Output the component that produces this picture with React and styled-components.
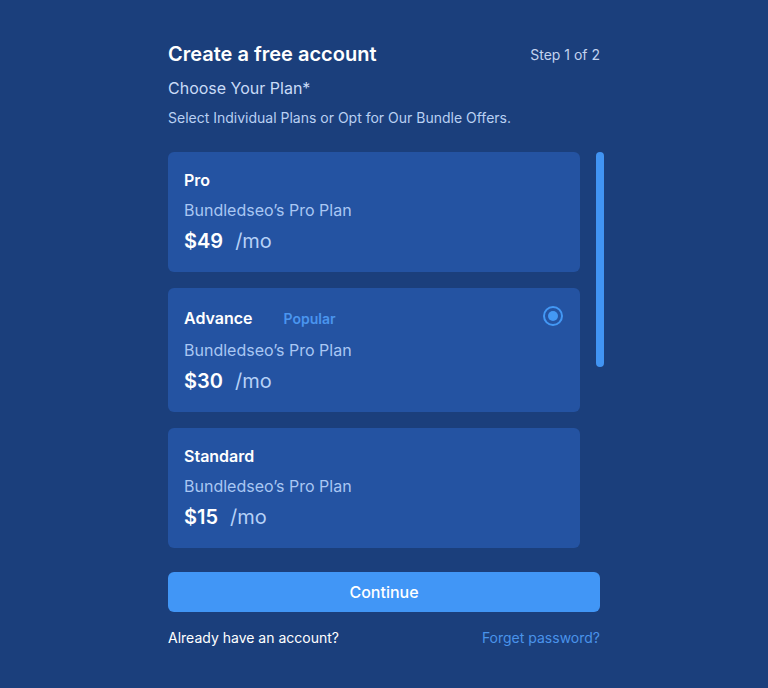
import React from "react";
import styled, { createGlobalStyle } from "styled-components";

const plans = [
	{ name: "Pro", desc: "Bundledseo’s Pro Plan", price: "$49" },
	{ name: "Advance", desc: "Bundledseo’s Pro Plan", price: "$30", popular: true, selected: true },
	{ name: "Standard", desc: "Bundledseo’s Pro Plan", price: "$15" },
];

export default function App() {
	return (
		<>
			<Global />
			<Page>
				<Form>
					<Header>
						<Title>Create a free account</Title>
						<Step>Step 1 of 2</Step>
					</Header>
					<Label>Choose Your Plan*</Label>
					<Hint>Select Individual Plans or Opt for Our Bundle Offers.</Hint>
					<ListRow>
						<List>
							{plans.map((p) => (
								<Card key={p.name}>
									<CardHead $tall={p.selected}>
										<Name>{p.name}</Name>
										{p.popular && <Badge>Popular</Badge>}
										{p.selected && <Radio />}
									</CardHead>
									<Desc>{p.desc}</Desc>
									<Price>
										{p.price}
										<Per>/mo</Per>
									</Price>
								</Card>
							))}
						</List>
						<Track>
							<Thumb />
						</Track>
					</ListRow>
					<Button>Continue</Button>
					<Footer>
						<span>Already have an account?</span>
						<LinkText href="#">Forget password?</LinkText>
					</Footer>
				</Form>
			</Page>
		</>
	);
}

const Global = createGlobalStyle`
	body {
		margin: 0;
		background: #1b3f7c;
		font-family: Inter, "Noto Sans", sans-serif;
	}
`;

const Page = styled.div`
	min-height: 688px;
	display: flex;
	justify-content: center;
	background: #1b3f7c;
`;

const Form = styled.div`
	width: 432px;
	padding-top: 40px;
	display: flex;
	flex-direction: column;
`;

const Header = styled.div`
	display: flex;
	justify-content: space-between;
	align-items: center;
	height: 28px;
`;

const Title = styled.h1`
	margin: 0;
	font-size: 20px;
	font-weight: 600;
	color: #ffffff;
`;

const Step = styled.span`
	font-size: 14px;
	color: #c3d3ef;
`;

const Label = styled.div`
	margin-top: 8px;
	font-size: 16px;
	line-height: 24px;
	color: #c9dbf7;
`;

const Hint = styled.div`
	margin-top: 8px;
	font-size: 14px;
	line-height: 20px;
	color: #b9d0f3;
`;

const ListRow = styled.div`
	margin-top: 24px;
	display: flex;
	gap: 16px;
	width: 436px;
	height: 396px;
`;

const List = styled.div`
	width: 412px;
	display: flex;
	flex-direction: column;
	gap: 16px;
	overflow: hidden;
`;

const Card = styled.div`
	flex: none;
	background: #2453a2;
	border-radius: 6px;
	padding: 16px;
	display: flex;
	flex-direction: column;
`;

const CardHead = styled.div`
	display: flex;
	align-items: center;
	height: ${(p) => (p.$tall ? "28px" : "24px")};
`;

const Name = styled.span`
	font-size: 16px;
	font-weight: 600;
	color: #ffffff;
`;

const Badge = styled.span`
	margin-left: 31px;
	font-size: 14px;
	font-weight: 600;
	color: #4a95ef;
`;

const Radio = styled.span`
	align-self: flex-start;
	margin: 2px 1px 0 auto;
	width: 20px;
	height: 20px;
	box-sizing: border-box;
	border: 2px solid #4398f5;
	border-radius: 50%;
	display: flex;
	align-items: center;
	justify-content: center;
	&::after {
		content: "";
		width: 10px;
		height: 10px;
		border-radius: 50%;
		background: #4398f5;
	}
`;

const Desc = styled.div`
	margin-top: 6px;
	font-size: 16px;
	line-height: 24px;
	color: #a9c7f3;
`;

const Price = styled.div`
	margin-top: 5px;
	font-size: 20px;
	line-height: 29px;
	font-weight: 600;
	color: #ffffff;
`;

const Per = styled.span`
	margin-left: 12px;
	font-weight: 400;
	color: #b6d1f7;
`;

const Track = styled.div`
	width: 8px;
`;

const Thumb = styled.div`
	width: 8px;
	height: 215px;
	border-radius: 4px;
	background: #4194f3;
`;

const Button = styled.button`
	margin-top: 24px;
	height: 40px;
	border: none;
	border-radius: 6px;
	background: #4196f6;
	color: #ffffff;
	font-family: inherit;
	font-size: 16px;
	font-weight: 500;
	cursor: pointer;
`;

const Footer = styled.div`
	margin-top: 16px;
	display: flex;
	justify-content: space-between;
	font-size: 14px;
	line-height: 20px;
	color: #ffffff;
`;

const LinkText = styled.a`
	color: #4a93ea;
	text-decoration: none;
`;
